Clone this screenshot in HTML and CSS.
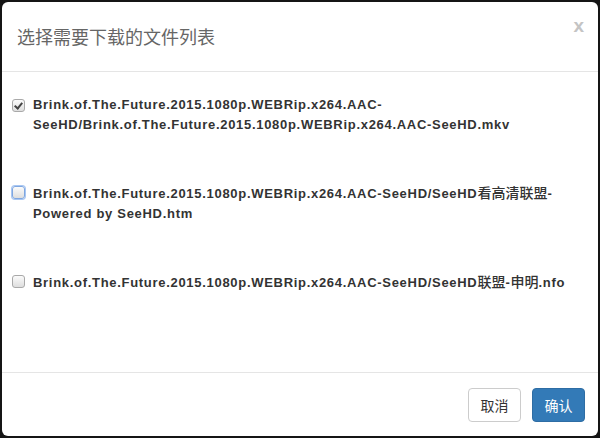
FILE: index.html
```html
<!DOCTYPE html>
<html lang="zh">
<head>
<meta charset="utf-8">
<title>选择需要下载的文件列表</title>
<link rel="stylesheet" href="styles.css">
</head>
<body>
<div class="modal">
  <div class="modal-header">
    <h4 class="modal-title">选择需要下载的文件列表</h4>
    <span class="close">x</span>
  </div>
  <div class="modal-body">
    <label class="item">
      <input type="checkbox" class="cb" checked>
      <span class="name">Brink.of.The.Future.2015.1080p.WEBRip.x264.AAC-SeeHD/Brink.of.The.Future.2015.1080p.WEBRip.x264.AAC-SeeHD.mkv</span>
    </label>
    <label class="item">
      <input type="checkbox" class="cb focus">
      <span class="name">Brink.of.The.Future.2015.1080p.WEBRip.x264.AAC-SeeHD/SeeHD<span class="cjk">看高清联盟</span>-Powered by SeeHD.htm</span>
    </label>
    <label class="item">
      <input type="checkbox" class="cb">
      <span class="name">Brink.of.The.Future.2015.1080p.WEBRip.x264.AAC-SeeHD/SeeHD<span class="cjk">联盟</span>-<span class="cjk">申明</span>.nfo</span>
    </label>
  </div>
  <div class="modal-footer">
    <button class="btn btn-default">取消</button>
    <button class="btn btn-primary">确认</button>
  </div>
</div>
</body>
</html>
```
FILE: styles.css
```css
html, body {
  margin: 0;
  padding: 0;
  height: 100%;
}
body {
  background: #151515;
  overflow: hidden;
}
.modal {
  margin: 2px;
  width: 596px;
  height: 434px;
  background: #fff;
  border-radius: 6px;
  display: flex;
  flex-direction: column;
  overflow: hidden;
}
.modal-header {
  height: 69px;
  border-bottom: 1px solid #e5e5e5;
  display: flex;
  align-items: flex-start;
  justify-content: space-between;
  padding: 0 14px 0 15px;
}
.modal-title {
  margin: 23px 0 0;
  font-family: "Noto Sans CJK SC", sans-serif;
  font-weight: normal;
  font-size: 18px;
  line-height: 22px;
  color: #666;
}
.close {
  margin-top: 12px;
  font-family: "Liberation Sans", Arial, sans-serif;
  font-weight: bold;
  font-size: 19px;
  line-height: 24px;
  color: #c4c4c4;
}
.modal-body {
  flex: 1;
  padding: 23px 15px 0 10px;
  display: flex;
  flex-direction: column;
  gap: 47px;
}
.item {
  display: flex;
  align-items: flex-start;
  gap: 8px;
  font-family: "Liberation Sans", Arial, "Noto Sans CJK SC", sans-serif;
  font-weight: bold;
  font-size: 13px;
  letter-spacing: 0.7px;
  line-height: 20px;
  color: #333;
}
.name {
  flex: 1;
}
.cjk {
  font-family: "Noto Sans CJK SC", sans-serif;
  font-weight: 500;
  font-size: 14px;
  letter-spacing: 0;
}
.cb {
  appearance: none;
  -webkit-appearance: none;
  flex: none;
  width: 13px;
  height: 13px;
  margin: 4px 0 0 0;
  border: 1px solid #a9a9a9;
  border-radius: 3px;
  background: linear-gradient(#fbfbfb, #dedede);
  position: relative;
  box-sizing: border-box;
}
.cb:checked::after {
  content: "";
  position: absolute;
  left: 3px;
  top: 1px;
  width: 3px;
  height: 6px;
  border: solid #444;
  border-width: 0 2px 2px 0;
  transform: rotate(40deg);
}
.cb.focus {
  border-color: #7ea6e0;
  box-shadow: 0 0 0 1px #a8c6f2;
}
.modal-footer {
  height: 63px;
  border-top: 1px solid #e5e5e5;
  display: flex;
  align-items: center;
  justify-content: flex-end;
  gap: 11px;
  padding: 0 13px 0 15px;
}
.btn {
  box-sizing: border-box;
  font-family: "Noto Sans CJK SC", sans-serif;
  font-size: 14px;
  line-height: 20px;
  padding: 6px 0;
  border-radius: 4px;
  border: 1px solid #ccc;
  height: 34px;
  width: 53px;
  white-space: nowrap;
  text-align: center;
}
.btn-default {
  background: #fff;
  color: #333;
}
.btn-primary {
  background: #337ab7;
  border-color: #2e6da4;
  color: #fff;
}
```
